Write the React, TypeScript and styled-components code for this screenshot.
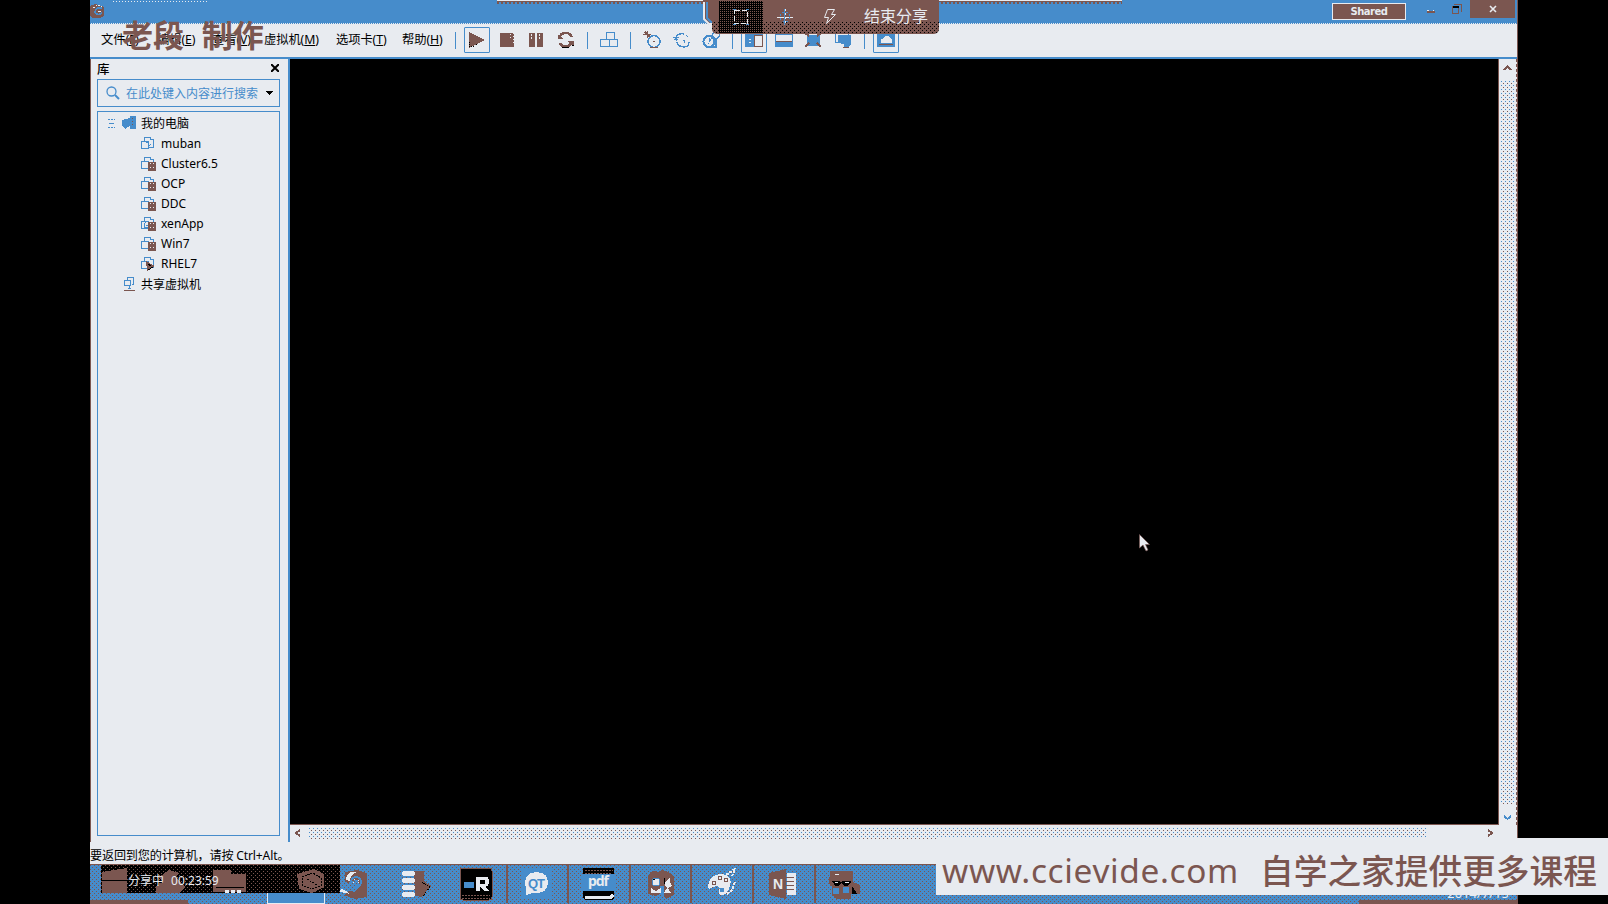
import React from 'react';
import styled, { createGlobalStyle } from 'styled-components';

const K = '#000000';
const L = '#e8ebf0';
const B = '#468ccb';
const R = '#7b5650';
const dot = (c: string) => `conic-gradient(at 1px 1px, transparent 75%, ${c} 0)`;
const dots = (c: string, s: number) => `${dot(c)} 0 0/${s}px ${s}px, ${dot(c)} ${s / 2}px ${s / 2}px/${s}px ${s}px`;

const Global = createGlobalStyle`
  * { box-sizing: border-box; }
  body { margin: 0; background: ${K}; overflow: hidden; }
  svg { display: block; }
`;
const Screen = styled.div`
  position: relative; width: 1608px; height: 904px; overflow: hidden; background: ${K};
  font-family: "Noto Sans", "Noto Sans CJK SC", sans-serif; font-size: 12px; color: ${K};
`;
const Window = styled.div`
  width: 1428px; height: 904px; margin-left: 90px; background: ${L};
  display: flex; flex-direction: column; border-right: 1px solid ${R};
`;
const TitleBar = styled.header`
  height: 23px; flex: none; background: ${B}; display: flex; align-items: flex-start;
`;
const TitleSpace = styled.div`flex: 1; height: 23px;`;
const DottedLine = styled.div`
  width: 94px; height: 1px; margin: 1px 0 0 8px; background: repeating-linear-gradient(90deg, ${L} 0 1px, transparent 1px 3px);
`;
const TopLine = styled.div`
  width: 625px; height: 4px; margin-left: 290px; border-top: 1px solid ${L};
  background: linear-gradient(${R}, ${R}) 0 0/100% 1px no-repeat, repeating-linear-gradient(90deg, ${R} 0 2px, ${B} 2px 4px);
`;
const Shared = styled.div`
  width: 74px; height: 17px; margin: 3px 0 0 0; background: ${R}; border: 1px solid ${L};
  color: ${L}; font: bold 10px/15px "DejaVu Sans", sans-serif; text-align: center; letter-spacing: -0.5px;
`;
const CloseButton = styled.div`
  width: 45px; height: 18px; background: ${R}; display: flex; align-items: center; justify-content: center; margin-right: 2px;
`;
const WinButtons = styled.div`display: flex; width: 64px; height: 18px;`;
const MenuBar = styled.nav`
  height: 36px; flex: none; display: flex; align-items: center; padding-left: 11px;
  border-top: 1px dotted ${B}; border-bottom: 2px solid ${B};
`;
const MenuItem = styled.span<{ $w: number }>`
  width: ${p => p.$w}px; flex: none; white-space: nowrap; line-height: 32px; height: 33px;
  font-size: 12.3px; letter-spacing: -0.1px;
  u { text-underline-offset: 1px; }
`;
const Sep = styled.i`
  width: 13.4px; flex: none; display: flex; justify-content: center;
  &::before { content: ''; width: 1px; height: 17px; background: ${B}; }
`;
const Tool = styled.div<{ $on?: boolean }>`
  width: 25.6px; height: 26px; margin: 0 2px; flex: none; display: flex; align-items: center; justify-content: center;
  border: 1px solid ${p => (p.$on ? B : 'transparent')}; border-radius: 1px; position: relative; top: -0.5px;
`;
const Body = styled.div`height: 782px; flex: none; display: flex;`;
const Library = styled.aside`
  width: 200px; flex: none; padding: 0 8px 0 6px; border-right: 2px solid ${B}; border-left: 1px solid ${R};
  display: flex; flex-direction: column; height: 783px;
`;
const LibHead = styled.div`
  height: 20px; display: flex; justify-content: space-between; align-items: center; padding: 0 1px 2px 0;
  font-size: 12.5px; font-weight: 500;
`;
const Search = styled.div`
  height: 28px; border: 1px solid ${B}; display: flex; align-items: center; color: ${B};
  padding: 0 6px 0 8px; font-size: 12px; white-space: nowrap;
  span { margin-left: 6px; flex: 1; }
`;
const Tree = styled.div`margin-top: 4px; height: 725px; border: 1px solid ${B}; padding-top: 1px;`;
const TreeRow = styled.div<{ $indent: number }>`
  height: 20.1px; padding-left: ${p => p.$indent}px; display: flex; align-items: center;
  font-size: 12px; white-space: nowrap;
  svg { margin-right: 5px; flex: none; }
`;
const Main = styled.main`flex: 1; min-width: 0; display: grid; grid-template-columns: minmax(0, 1fr) 18px; grid-template-rows: 1fr 16px;`;
const Viewport = styled.div`background: ${K}; border-bottom: 1px solid ${R}; border-right: 1px solid ${R};`;
const VScroll = styled.div`
  display: flex; flex-direction: column; align-items: center; justify-content: space-between; padding: 6px 0 4px;
  border-right: 1px dashed ${R};
`;
const HScroll = styled.div`display: flex; align-items: center; justify-content: space-between; padding: 0 6px 0 5px;`;
const VThumb = styled.div`width: 13px; height: 724px; background: ${dot(B)} 0 0/4px 4px, ${dot(R)} 2px 2px/4px 4px;`;
const HThumb = styled.div`
  width: 1117px; height: 11px; margin: 0 auto 0 8px; flex: none; background: ${dot(B)} 0 0/4px 4px, ${dot(R)} 2px 2px/4px 4px;
`;
const Status = styled.div`height: 23px; flex: none; line-height: 30px; white-space: nowrap; font-size: 12.1px; letter-spacing: -0.15px;`;
const TaskBar = styled.footer`
  height: 40px; flex: none; display: flex; border-top: 1px solid ${R};
  background: ${dots(R, 4)}, ${B};
`;
const TaskStart = styled.div`width: 234.5px; flex: none; display: flex; justify-content: flex-end;`;
const ActiveTask = styled.div`
  width: 58px; border: 1px solid ${L}; border-top: 0;
  background: ${B};
`;
const Task = styled.div<{ $framed?: boolean; $w?: number }>`
  width: ${p => p.$w ?? 61.6}px; height: 38px; flex: none; display: flex; align-items: center; justify-content: center;
  border-right: ${p => (p.$framed ? 2 : 0)}px solid ${R};
`;
const TrayDate = styled.div`
  flex: 1; display: flex; align-items: flex-end; justify-content: flex-end; color: ${L}; font-size: 13px; line-height: 14px; padding: 0 8px 4px;
`;
const RecordBar = styled.div`
  position: absolute; left: 101px; top: 865px; width: 239px; height: 28px;
  background: ${dots(R, 4)}, ${K}; color: ${L};
`;
const RecordText = styled.span`
  position: absolute; left: 27px; top: 7px; line-height: 18px; font-size: 12px; white-space: pre;
  word-spacing: 4px;
`;
const SharePanel = styled.div`
  position: absolute; left: 712px; top: 0; width: 227px; height: 34px; border-radius: 0 0 5px 5px; overflow: hidden;
  display: flex; align-items: center; padding-left: 7px; color: ${L};
  background: linear-gradient(${R}, ${R}) 0 0/100% 21px no-repeat, ${dots(K, 4)}, ${R};
`;
const ShareSlot = styled.div<{ $w: number; $dark?: boolean }>`
  width: ${p => p.$w}px; height: 32px; display: flex; align-items: center; justify-content: center;
  background: ${p => (p.$dark ? `repeating-linear-gradient(0deg, ${K} 0 1px, transparent 1px 2px), repeating-linear-gradient(90deg, ${K} 0 1px, ${R} 1px 2px)` : 'none')};
`;
const ShareText = styled.span`font-size: 16px; line-height: 30px; height: 32px; white-space: nowrap; margin-left: 11px;`;
const Grip = styled.svg`position: absolute; left: 700px; top: 0;`;
const Stamp = styled.div`
  position: absolute; left: 122px; top: 15px; font: 700 31px/44px "Liberation Serif", "Noto Sans CJK SC", serif; color: ${R};
  white-space: pre; word-spacing: 10px;
`;
const Banner = styled.div`
  position: absolute; left: 936px; top: 838px; width: 672px; height: 57px; background: ${L}; color: ${R};
  display: flex; align-items: center; padding: 7px 0 0 6px; white-space: nowrap;
`;
const BannerUrl = styled.span`width: 318px; flex: none; font-size: 33.4px; line-height: 48px; letter-spacing: 0.65px;`;
const BannerText = styled.span`font-size: 33.7px; line-height: 48px; font-weight: 500; font-family: "Noto Sans CJK SC", sans-serif;`;
const Pointer = styled.svg`position: absolute; left: 1139px; top: 534px;`;
const TrayEdge = styled.div`position: absolute; left: 1359px; top: 900px; width: 158px; height: 4px; background: ${R};`;
const TaskEdge = styled.div`position: absolute; left: 90px; top: 900px; width: 98px; height: 4px; background: ${R};`;

const Svg = ({ w = 18, h = 18, children }: { w?: number; h?: number; children: React.ReactNode }) => (
  <svg width={w} height={h} viewBox={`0 0 ${w} ${h}`} fill="none" stroke={B} shapeRendering="crispEdges">{children}</svg>
);
const Vm = ({ state }: { state: string }) => (
  <Svg w={15} h={15}>
    <path d="M3.500 5V1.500H9.500V4M.5 5.500H7.500V12.500H.5ZM9.500 3.500H12.500V11.500H7.500" />
    {state === 'none' && <path d="M5 6.500H8M10 8L8 10" />}
    {state === 'app' && <path d="M3 8L6 5L9 7V11H3ZM5 9H8" />}
    {(state === 'off' || state === 'app') && <><path d="M7 6H15V15H7Z" fill={R} stroke="none" /><path d="M9.500 7V14M12.500 7V14" stroke={L} strokeDasharray="1 3" /></>}
    {state === 'on' && <><path d="M5 5L14 10L6 15Z" fill={R} stroke="none" /><path d="M7 14L12 11M7 8L10 10" stroke={K} /></>}
  </Svg>
);

const machines: [string, string][] = [
  ['muban', 'none'], ['Cluster6.5', 'off'], ['OCP', 'off'], ['DDC', 'off'], ['xenApp', 'app'], ['Win7', 'off'], ['RHEL7', 'on'],
];
const menus: [string, string, number][] = [
  ['文件', 'F', 56], ['编辑', 'E', 55], ['查看', 'V', 52], ['虚拟机', 'M', 72], ['选项卡', 'T', 66], ['帮助', 'H', 47],
];

const Toolbar = () => (
  <>
    <Sep />
    <Tool $on><Svg><path d="M1 1L17 9L1 17Z" fill={R} stroke="none" /><path d="M1.500 11V17M3 15.500H6M8 13.500H10" stroke={K} strokeDasharray="1 1" /></Svg></Tool>
    <Tool><Svg><path d="M2 2H16V16H2Z" fill={R} stroke="none" /><path d="M12.500 3V8M15.500 2V13" stroke={L} strokeDasharray="1 2" /></Svg></Tool>
    <Tool><Svg><path d="M2 2H8V16H2ZM10 2H16V16H10Z" fill={R} stroke="none" /><path d="M4.500 3V8M12.500 3V9" stroke={L} strokeDasharray="2 1" /></Svg></Tool>
    <Tool><Svg><path d="M2 7C4 1 12 0 15 6M3 12C5 17 12 17 15 11" stroke={R} strokeWidth="2.500" /><path d="M1 4V8H7ZM10 10H17V15Z" fill={R} stroke="none" /><path d="M5 16.500H12M15 14.500H17" stroke={K} /></Svg></Tool>
    <Sep />
    <Tool><Svg><path d="M6.500 8V1.500H14.500V8M.5 8.500H9.500V15.500H.5ZM9.500 8.500H17.500V15.500H9.500" /></Svg></Tool>
    <Sep />
    <Tool><Svg><circle cx="11" cy="10.500" r="6" strokeWidth="1.500" /><path d="M10 10.500H12M7 16.500H15" stroke={R} /><path d="M0 3.500H8M4.500 0V7M2 1L7 6" stroke={R} strokeWidth="1.500" /></Svg></Tool>
    <Tool><Svg><path d="M3 8C3 4 6 2 11 3M4 11C5 15 8 16 11 16C14 16 16 14 16 11M13 4L15 6" strokeWidth="1.400" /><path d="M0 6.500H6M1 8.500H5M3.500 4V10" /><path d="M10 9.500H12M11.500 9V12" /></Svg></Tool>
    <Tool><Svg><circle cx="7" cy="10.500" r="5.500" strokeWidth="2" /><path d="M7 7V11L10 7" /><circle cx="14" cy="4" r="3.500" strokeWidth="1.500" /><path d="M14 8V16H10" strokeWidth="2" /></Svg></Tool>
    <Sep />
    <Tool $on><Svg><path d="M0 2H18V16H0Z" fill={B} stroke="none" /><path d="M9 4H17V15H9Z" fill={L} stroke={R} /><path d="M4 8H6M4 11H6" stroke={L} /></Svg></Tool>
    <Tool><Svg><path d="M0 2H18V16H0Z" fill={B} stroke="none" /><path d="M1 4H17V10H1Z" fill={L} stroke="none" /><path d="M1 10.500H17" stroke={R} /></Svg></Tool>
    <Tool><Svg><path d="M3 4H15V14H3Z" fill={B} /><path d="M1 2L5 5M17 2L13 5M1 16L5 12M17 16L13 12" stroke={R} strokeWidth="2" /></Svg></Tool>
    <Tool><Svg><path d="M1.500 1.500H14V11H1.500Z" /><path d="M4 4H16V14L14 16H10V13L4 11Z" fill={B} /><path d="M9 16.500H15" stroke={R} /></Svg></Tool>
    <Sep />
    <Tool $on><Svg><path d="M0 2H18V16H0Z" fill={B} stroke="none" /><path d="M4 12V8H6L8 5H12L15 9V12Z" fill={L} stroke="none" /><path d="M2 13.500H16" stroke={R} /></Svg></Tool>
  </>
);

const TaskIcons = () => (
  <>
    <Task><Svg w={32} h={32}>
      <path d="M6 4L18 2L28 5V29L16 31L5 27L9 23L16 24L21 18L18 11L9 15L6 14Z" fill={R} stroke="none" /><path d="M7 12C7 6 12 2 18 4C13 5 11 9 11 13Z" fill={L} stroke="none" /><path d="M0 22C5 20 7 23 11 26L1 24Z" fill={L} stroke="none" /><circle cx="17" cy="14" r="5" strokeWidth="2" /><circle cx="17" cy="14" r="3" stroke={L} strokeDasharray="1 3" />
    </Svg></Task>
    <Task $w={60}><Svg w={32} h={32}>
      <path d="M14 3H24V13L31 18L22 29L15 28Z" fill={R} stroke="none" />
      <path d="M4 3H13L15 4V7L13 8H4L2 7V4ZM4 10H13L15 11V14L13 15H4L2 14V11ZM4 17H13L15 18V21L13 22H4L2 21V18ZM4 24H13L15 25V28L13 29H4L2 28V25Z" fill={L} stroke="none" /><path d="M22 14L30 19L22 29" stroke={K} strokeDasharray="1 1" />
    </Svg></Task>
    <Task $framed><Svg w={34} h={34}>
      <rect x="1" y="1" width="32" height="32" rx="3" fill={K} stroke={R} /><path d="M5 15H15V21H5Z" fill={B} stroke="none" /><path d="M17 10H27Q30 10 30 15Q30 19 26 20L30 24H25L21 20V24H17Z" fill={L} stroke="none" /><path d="M21 13H26V17H21Z" fill={K} stroke="none" /><path d="M3 28H31M3 31H31" stroke={R} strokeDasharray="2 1" />
    </Svg></Task>
    <Task $framed><Svg w={30} h={30}>
      <path d="M-2 0H30V30H-2Z" fill={B} stroke="none" />
      <path d="M14 3C23 3 26 8 26 14C26 22 19 25 10 24L4 26V20C1 11 4 3 14 3Z" fill={L} stroke="none" />
      <text x="6" y="19" fontFamily="Liberation Sans" fontSize="13" fontWeight="bold" fill={B} stroke="none" textLength="17">QT</text>
    </Svg></Task>
    <Task $framed><Svg w={34} h={34}>
      <path d="M0 8H34V24H0Z" fill={B} stroke="none" />
      <path d="M1 1H32V7H1ZM1 24H32V31L30 33H3L1 31Z" fill={K} stroke="none" /><path d="M3 3H31M3 6H29" stroke={R} strokeDasharray="2 1" /><path d="M3 30H29L31 28" stroke={L} strokeWidth="3" />
      <text x="6" y="19" fontFamily="Noto Sans" fontSize="14" fontWeight="bold" fill={L} stroke="none" textLength="21">pdf</text>
    </Svg></Task>
    <Task $framed><Svg w={30} h={32}>
      <path d="M2 8Q6 0 12 4Q17 0 24 5L28 9V27L20 31L16 25L10 28L2 26Z" fill={R} stroke="none" /><path d="M14 18H18V27H14Z" fill={B} stroke="none" /><circle cx="10" cy="14" r="4" fill={L} stroke={B} /><path d="M5 20L10 23L15 20V25H5ZM18 15L24 9V14L26 18L22 20L25 25H18L21 20Z" fill={L} stroke="none" /><path d="M7 11H9M18 10V16" stroke={K} />
    </Svg></Task>
    <Task $framed><Svg w={32} h={32}>
      <path d="M2 19C2 10 8 6 16 6C24 6 26 12 24 18C22 25 17 29 14 27C11 24 16 20 12 18C8 17 2 24 2 19Z" fill={L} stroke="none" /><circle cx="8" cy="15" r="2" stroke={R} /><circle cx="14" cy="10" r="2" stroke={R} /><circle cx="20" cy="12" r="2" stroke={R} /><circle cx="16" cy="22" r="2" fill={B} /><path d="M20 7L29 1L26 8M29 14L26 22L21 26" stroke={L} strokeDasharray="3 1" strokeWidth="2" />
    </Svg></Task>
    <Task $framed><Svg w={30} h={30}>
      <path d="M0 4L17 0V30L0 26Z" fill={R} stroke="none" /><path d="M18 4H27V26H18Z" fill={L} stroke="none" /><path d="M18 8.500H25M18 12.500H25M18 16.500H25M18 20.500H25" stroke={R} /><path d="M28 4V27" strokeDasharray="3 1" />
      <text x="4" y="20" fontFamily="Liberation Sans" fontSize="14" fontWeight="bold" fill={L} stroke="none">N</text>
    </Svg></Task>
    <Task $w={56}><Svg w={34} h={32}>
      <path d="M3 3H26V14L33 17V26H24V31H9L5 26V18L2 16Z" fill={R} stroke="none" /><path d="M6 20H12V26H6ZM16 19H22V25H16Z" fill={B} stroke="none" /><path d="M6 13.500H12L14 14.500L17 13.500H23V15L21 17H17L14 14L12 17H8Z" fill={K} stroke={K} /><path d="M8 14.500H11M18 14.500H22M8 6H12" stroke={L} /><path d="M25 19L29 25H25Z" fill={K} stroke={K} />
    </Svg></Task>
  </>
);

export default function App() {
  return (
    <Screen>
      <Global />
      <Window>
        <TitleBar>
          <Svg w={15} h={19}><path d="M0 6L5 4L14 7V16L10 18H2L0 15Z" fill={R} stroke="none" /><path d="M3 8L8 5L12 7" stroke={L} strokeDasharray="2 1" /><path d="M12 8C8 7 5 9 5 12C6 15 9 15 12 13" strokeWidth="1.500" /><path d="M8 11H11" stroke={L} /></Svg>
          <DottedLine />
          <TopLine />
          <TitleSpace />
          <Shared>Shared</Shared>
          <WinButtons><Svg w={64} h={18}><path d="M21 12H29" stroke={R} strokeWidth="2" /><path d="M21 10.500H28" stroke={L} strokeDasharray="2 4" /><path d="M46.500 6.500H52.500V13.500H46.500ZM48 4.500H55.500V12" stroke={R} /><path d="M47 7H53" stroke={K} strokeWidth="2" /></Svg></WinButtons>
          <CloseButton><Svg w={8} h={8}><path d="M1 1L7 7M7 1L1 7" stroke={L} strokeWidth="1.600" shapeRendering="auto" /></Svg></CloseButton>
        </TitleBar>
        <MenuBar>
          {menus.map(([name, key, w]) => <MenuItem key={key} $w={w}>{name}(<u>{key}</u>)</MenuItem>)}
          <Toolbar />
        </MenuBar>
        <Body>
          <Library>
            <LibHead>库<Svg w={8} h={8}><path d="M0 0L8 8M8 0L0 8" stroke={K} strokeWidth="2" shapeRendering="auto" /></Svg></LibHead>
            <Search>
              <Svg w={14} h={14}><circle cx="5.500" cy="5.500" r="4.500" strokeWidth="1.300" shapeRendering="auto" /><path d="M9 9L13 13" strokeWidth="2" shapeRendering="auto" /></Svg>
              <span>在此处键入内容进行搜索</span>
              <Svg w={8} h={4}><path d="M0 0H8L4 4Z" fill={K} stroke="none" /></Svg>
            </Search>
            <Tree>
              <TreeRow $indent={8}>
                <Svg w={30} h={14}><path d="M2 3.500H9M2 11.500H9" strokeDasharray="2 1" /><path d="M3 7.500H8" /><path d="M16 4L24 2V10L19 13L16 10ZM24 0H30V13H24Z" fill={B} stroke="none" /><path d="M26.500 2V11" stroke={R} strokeDasharray="1 2" /></Svg>
                我的电脑
              </TreeRow>
              {machines.map(([name, state]) => <TreeRow key={name} $indent={43}><Vm state={state} />{name}</TreeRow>)}
              <TreeRow $indent={25}>
                <Svg w={13} h={14}><path d="M4.500 3.500V.5H10.500V7.500H8.500M1.500 3.500H7.500V8.500H1.500ZM6.500 9V11M5 11.500H8" /><path d="M1 13.500H12" stroke={R} /></Svg>
                共享虚拟机
              </TreeRow>
            </Tree>
          </Library>
          <Main>
            <Viewport />
            <VScroll>
              <Svg w={9} h={6}><path d="M1 5L4.500 1L8 5" stroke={R} strokeWidth="2" /></Svg>
              <VThumb />
              <Svg w={9} h={6}><path d="M1 1L4.500 4L8 1" strokeWidth="2" /></Svg>
            </VScroll>
            <HScroll>
              <Svg w={6} h={8}><path d="M5 1L1 4L5 7" stroke={R} strokeWidth="2" /></Svg>
              <HThumb />
              <Svg w={6} h={8}><path d="M1 1L5 4L1 7" stroke={R} strokeWidth="2" /></Svg>
            </HScroll>
          </Main>
        </Body>
        <Status>要返回到您的计算机，请按 Ctrl+Alt。</Status>
        <TaskBar>
          <TaskStart><ActiveTask /></TaskStart>
          <TaskIcons />
          <TrayDate>2014/7/15</TrayDate>
        </TaskBar>
      </Window>
      <TaskEdge />
      <RecordBar>
        <Svg w={239} h={28}>
          <path d="M1 7L26 3V28H1ZM10 15H26" fill={R} stroke="none" /><path d="M1 15.500H26" stroke={K} />
          <path d="M58 12L68 5L79 8L74 12L84 22L78 28H62L55 28V21L62 17Z" fill={R} stroke="none" />
          <path d="M112 5H130V9H145V27H112Z" fill={R} stroke="none" /><path d="M115 22.500H143" stroke={K} /><path d="M124 26H142" stroke={L} strokeWidth="3" strokeDasharray="4 2" />
          <path d="M183.500 0V28" stroke={K} />
          <path d="M196 9L213 4L223 9V22L211 28L198 24Z" fill={R} stroke="none" /><path d="M201 12L212 8L220 13V21L210 24L201 20ZM206 14L216 20" stroke={K} strokeDasharray="2 1" />
        </Svg>
        <RecordText>分享中 00:23:59</RecordText>
      </RecordBar>
      <Stamp>老段 制作</Stamp>
      <Grip width="18" height="29" viewBox="0 0 18 29" fill="none"><path d="M3 2V19L9 25H18V0H3Z" fill={R} /><path d="M4 2V19L9 24H18" stroke={L} strokeWidth="2" /><path d="M7 2V18L11 22H17" stroke={B} strokeWidth="2" /></Grip>
      <SharePanel>
        <ShareSlot $w={44} $dark><Svg><path d="M2.500 2.500H15.500V15.500H2.500Z" stroke={L} strokeDasharray="5 2" /><path d="M1 1.500H4M14 1.500H17M1 16.500H4M14 16.500H17" /></Svg></ShareSlot>
        <ShareSlot $w={44}><Svg><path d="M1 9.500H17" stroke={L} /><circle cx="9" cy="9" r="5" strokeDasharray="2 2" /><path d="M8.500 1V17" /><path d="M9.500 1V17" stroke={L} strokeDasharray="2 2" /></Svg></ShareSlot>
        <ShareSlot $w={46}><Svg w={14} h={18}><path d="M4.500 1.500H11.500L8.500 6.500H12.500L3.500 15.500L5.500 9.500H1.500Z" stroke={L} shapeRendering="auto" /></Svg></ShareSlot>
        <ShareText>结束分享</ShareText>
      </SharePanel>
      <Banner><BannerUrl>www.ccievide.com</BannerUrl><BannerText>自学之家提供更多课程</BannerText></Banner>
      <TrayEdge />
      <Pointer width="11" height="18" viewBox="0 0 11 18"><path d="M.5 .5V14L4 11L7 17L9 16L6.500 10.500H10.500Z" fill={L} stroke={R} strokeWidth=".6" /></Pointer>
    </Screen>
  );
}
